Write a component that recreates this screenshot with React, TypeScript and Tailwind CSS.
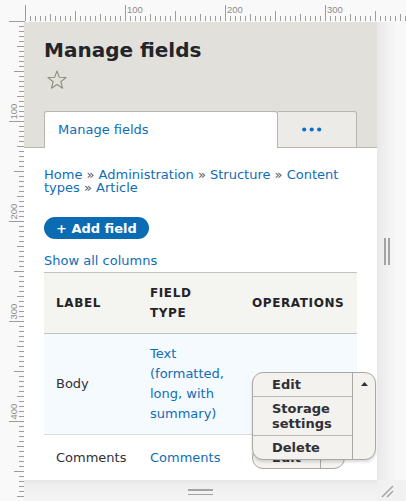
import React from 'react';

const LINK = 'text-[#0f6db8]';

function TopRuler() {
  const ticks: React.ReactNode[] = [];
  const labels: React.ReactNode[] = [];
  for (let k = 0; k <= 76; k++) {
    const x = 25.5 + k * 5;
    const len = k % 20 === 0 ? 16 : k % 10 === 0 ? 10 : k % 5 === 0 ? 7 : 5;
    ticks.push(<line key={k} x1={x} x2={x} y1={21 - len} y2={21} />);
    if (k % 20 === 0 && k > 0) {
      labels.push(
        <text key={k} x={x + 1.5} y={13}>
          {k * 5}
        </text>
      );
    }
  }
  return (
    <svg width="406" height="22" className="block shrink-0">
      <g stroke="#9c9c9c" strokeWidth="1">
        {ticks}
        <line x1="9" x2="25" y1="21.5" y2="21.5" />
      </g>
      <g fill="#8c8c8c" fontSize="9.5" fontFamily="Liberation Sans, Arial, sans-serif">
        {labels}
      </g>
    </svg>
  );
}

function LeftRuler() {
  const ticks: React.ReactNode[] = [];
  const labels: React.ReactNode[] = [];
  for (let k = 1; k <= 96; k++) {
    const y = k * 5 - 0.5;
    const len = k % 20 === 0 ? 15 : k % 10 === 0 ? 10 : k % 5 === 0 ? 7 : 5;
    ticks.push(<line key={k} x1={24 - len} x2={24} y1={y} y2={y} />);
    if (k % 20 === 0) {
      labels.push(
        <text key={k} x={17} y={y - 2} transform={`rotate(-90 17 ${y - 2})`}>
          {k * 5}
        </text>
      );
    }
  }
  return (
    <svg width="24" height="479" className="block shrink-0">
      <g stroke="#9c9c9c" strokeWidth="1">{ticks}</g>
      <g fill="#8c8c8c" fontSize="9.5" fontFamily="Liberation Sans, Arial, sans-serif">
        {labels}
      </g>
    </svg>
  );
}

function Star() {
  return (
    <svg width="20" height="20" viewBox="0 0 20 20" className="block ml-[3px]">
      <polygon
        points="10,1 12.35,7.26 19.03,7.56 13.8,11.74 15.59,18.19 10,14.5 4.41,18.19 6.2,11.74 0.97,7.56 7.65,7.26"
        fill="none"
        stroke="#8f8d82"
        strokeWidth="1.1"
        strokeLinejoin="round"
      />
    </svg>
  );
}

function Sep() {
  return <span className="text-[#55565e]"> » </span>;
}

function OpenDropbutton() {
  return (
    <div className="absolute left-0 top-[-1px] z-10 flex overflow-hidden rounded-[11px] border border-[#a9a8a2] bg-[#f3f2ee] shadow-[0_2px_3px_rgba(0,0,0,0.15)]">
      <div className="flex w-[99px] flex-col text-[13px] font-bold leading-[15px] text-[#2f3035]">
        <div className="flex h-[23px] items-center pl-[19px]">Edit</div>
        <div className="border-t border-[#bab9b3] py-1 pl-[19px] pr-2">Storage settings</div>
        <div className="flex h-[24px] items-center border-t border-[#bab9b3] pl-[19px]">Delete</div>
      </div>
      <div className="w-[23px] border-l border-[#a9a8a2]">
        <div className="flex h-[23px] items-center justify-center">
          <svg width="7" height="4" viewBox="0 0 7 4" className="block">
            <polygon points="0,4 3.5,0 7,4" fill="#303136" />
          </svg>
        </div>
      </div>
    </div>
  );
}

function ClosedDropbutton() {
  return (
    <div className="flex h-[23px] w-fit overflow-hidden rounded-[11px] border border-[#a9a8a2] bg-[#f3f2ee] text-[13px] font-bold text-[#2f3035]">
      <div className="flex items-center px-[19px]">Edit</div>
      <div className="flex w-[24px] items-center justify-center border-l border-[#a9a8a2]">
        <svg width="7" height="4" viewBox="0 0 7 4" className="block">
          <polygon points="0,0 7,0 3.5,4" fill="#303136" />
        </svg>
      </div>
    </div>
  );
}

function Frame() {
  return (
    <div className="relative h-[458px] w-[353px] shrink-0 overflow-hidden bg-white">
      {/* Page header */}
      <div className="bg-[#e1e0da] pt-4">
        <h1 className="px-5 text-[20px] font-bold leading-6 text-[#232429]">Manage fields</h1>
        <div className="mt-2 px-5">
          <Star />
        </div>
        <div className="mt-[21px] flex h-[37px]">
          <div className="w-5 border-b border-[#b6b5af]" />
          <div className={`flex w-[234px] items-center rounded-t-[3px] border border-b-0 border-[#b6b5af] bg-white pl-[13px] text-[13px] ${LINK}`}>
            Manage fields
          </div>
          <div className="flex w-[79px] items-center justify-center rounded-tr-[3px] border border-l-0 border-[#b6b5af] bg-[#ecebe7] pr-[10px]">
            <svg width="20" height="5" viewBox="0 0 20 5" className="block">
              <circle cx="2.2" cy="2.5" r="2.1" fill="#0c70c4" />
              <circle cx="9.7" cy="2.5" r="2.1" fill="#0c70c4" />
              <circle cx="17.2" cy="2.5" r="2.1" fill="#0c70c4" />
            </svg>
          </div>
          <div className="flex-1 border-b border-[#b6b5af]" />
        </div>
      </div>

      {/* Content */}
      <div className="px-5 pt-5">
        <nav className="text-[13px] leading-[13px]">
          <a className={LINK}>Home</a>
          <Sep />
          <a className={LINK}>Administration</a>
          <Sep />
          <a className={LINK}>Structure</a>
          <Sep />
          <a className={LINK}>Content types</a>
          <Sep />
          <a className={LINK}>Article</a>
        </nav>

        <button className="mt-[23px] flex h-[22px] items-center rounded-full bg-[#0b6cb4] px-3 text-[13px] font-bold leading-none text-white">
          + Add field
        </button>

        <div className={`mt-3 text-[13px] leading-5 ${LINK}`}>Show all columns</div>

        <table className="mt-px w-[313px] table-fixed">
          <colgroup>
            <col className="w-[94px]" />
            <col className="w-[102px]" />
            <col className="w-[117px]" />
          </colgroup>
          <thead>
            <tr className="border-t border-b border-[#c3c2bc] bg-[#f4f4f0]">
              <th className="px-3 py-[10px] text-left align-middle text-[12px] font-bold uppercase leading-5 tracking-[0.05em] text-[#232429]">Label</th>
              <th className="px-3 py-[10px] text-left align-middle text-[12px] font-bold uppercase leading-5 tracking-[0.05em] text-[#232429]">Field type</th>
              <th className="px-3 py-[10px] text-left align-middle text-[12px] font-bold uppercase leading-5 tracking-[0.05em] text-[#232429]">Operations</th>
            </tr>
          </thead>
          <tbody>
            <tr className="border-b border-[#dcdbd5] bg-[#f5faff]">
              <td className="px-3 py-[10px] align-middle text-[13px] leading-5 text-[#2f3035]">Body</td>
              <td className={`px-3 py-[10px] align-middle text-[13px] leading-5 ${LINK}`}>Text (formatted, long, with summary)</td>
              <td className="px-3 py-[10px] align-middle">
                <div className="relative h-[23px]">
                  <OpenDropbutton />
                </div>
              </td>
            </tr>
            <tr className="border-b border-[#dcdbd5]">
              <td className="px-3 py-[11px] align-middle text-[13px] leading-5 text-[#2f3035]">Comments</td>
              <td className={`px-3 py-[11px] align-middle text-[13px] leading-5 ${LINK}`}>Comments</td>
              <td className="px-3 py-[11px] align-middle">
                <ClosedDropbutton />
              </td>
            </tr>
          </tbody>
        </table>
      </div>
    </div>
  );
}

export default function App() {
  return (
    <div className="flex h-[501px] w-[406px] flex-col overflow-hidden bg-[#f9f9f9] font-['DejaVu_Sans',sans-serif]">
      <TopRuler />
      <div className="flex min-h-0 flex-1">
        <LeftRuler />
        <div className="flex flex-col">
          <div className="flex">
            <Frame />
            <div className="flex h-[458px] w-[29px] items-center gap-[2px] bg-[linear-gradient(to_right,#e8e8e8_0px,#f0f0f0_9px,#f8f8f8_20px)] pl-[7px]">
              <div className="h-[27px] w-[2px] bg-[#a3a3a3]" />
              <div className="h-[27px] w-[2px] bg-[#a3a3a3]" />
            </div>
          </div>
          <div className="flex h-[21px]">
            <div className="flex w-[353px] flex-col items-center gap-[3px] bg-[linear-gradient(to_bottom,#e6e6e6_0px,#eeeeee_5px,#f5f5f5_21px)] pt-[9px]">
              <div className="h-[1.5px] w-[25px] bg-[#a3a3a3]" />
              <div className="h-[1.5px] w-[25px] bg-[#a3a3a3]" />
            </div>
            <div className="w-[29px] bg-[#f1f1f1]">
              <svg width="29" height="21" className="block">
                <line x1="5" y1="17" x2="16" y2="6" stroke="#a3a3a3" strokeWidth="1.5" />
                <line x1="10" y1="17" x2="16" y2="11" stroke="#a3a3a3" strokeWidth="1.5" />
              </svg>
            </div>
          </div>
        </div>
      </div>
    </div>
  );
}
